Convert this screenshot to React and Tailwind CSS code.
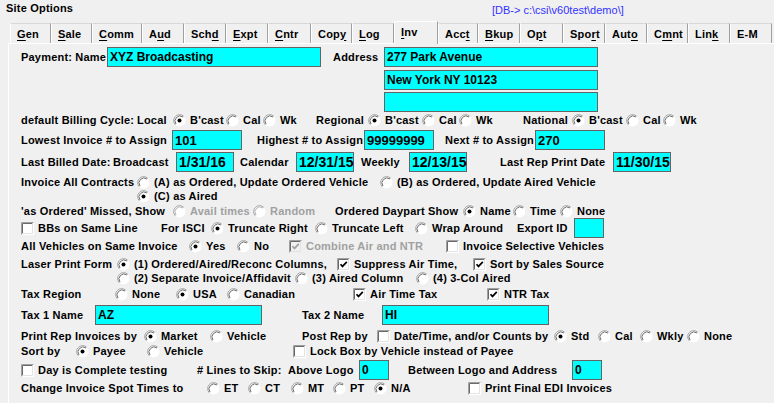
import React from 'react';

// Site Options — zakładka "Inv" (klasyczny formularz WinForms)

const TABS = [
  ['Gen', 0, 'w-[41px]'],
  ['Sale', 0, 'w-[41px]'],
  ['Comm', 0, 'w-[50px]'],
  ['Aud', 1, 'w-[42px]'],
  ['Schd', 3, 'w-[42px]'],
  ['Expt', 0, 'w-[42px]'],
  ['Cntr', 0, 'w-[43px]'],
  ['Copy', 3, 'w-[41px]'],
  ['Log', 0, 'w-[42px]'],
  ['Inv', 0, 'w-[44px]'],
  ['Acct', 3, 'w-[40px]'],
  ['Bkup', 0, 'w-[42px]'],
  ['Opt', 1, 'w-[43px]'],
  ['Sport', 3, 'w-[42px]'],
  ['Auto', 3, 'w-[42px]'],
  ['Cmnt', 1, 'w-[41px]'],
  ['Link', 3, 'w-[42px]'],
  ['E-M', -1, 'w-[42px]'],
];

function Radio({ on, off }) {
  return (
    <svg width="13" height="13" viewBox="0 0 13 13" className="shrink-0">
      <circle cx="6.5" cy="6.5" r="6" fill="#fff" />
      <path d="M2.26 10.74 A6 6 0 0 1 10.74 2.26" fill="none" stroke="#a0a0a0" strokeWidth="1" />
      <path d="M3.0 10.0 A5 5 0 0 1 10.0 3.0" fill="none" stroke={off ? '#b4b4b4' : '#6e6e6e'} strokeWidth="1" />
      {on && <circle cx="6.5" cy="6.5" r="2" fill={off ? '#a0a0a0' : '#000'} />}
    </svg>
  );
}

function Box({ on, off }) {
  return (
    <svg width="13" height="13" viewBox="0 0 13 13" className="shrink-0">
      <rect x="0" y="0" width="13" height="13" fill={off ? '#f0f0f0' : '#fff'} />
      <path d="M0.5 12.5 V0.5 H12.5" fill="none" stroke="#a0a0a0" />
      <path d="M1.5 11.5 V1.5 H11.5" fill="none" stroke="#696969" />
      <path d="M1.5 11.5 H11.5 V1.5" fill="none" stroke="#e3e3e3" />
      {on && (
        <path d="M3.5 6.2 L5.5 8.4 L9.8 3.8" fill="none" stroke={off ? '#a0a0a0' : '#000'} strokeWidth="1.7" />
      )}
    </svg>
  );
}

const L = ({ w = '', gray, children }) => (
  <div className={`${w} shrink-0 ${gray ? 'text-[#a0a0a0]' : ''}`}>{children}</div>
);

const Opt = ({ w = '', on, off, children }) => (
  <div className={`${w} shrink-0 flex items-center ${off ? 'text-[#a0a0a0]' : ''}`}>
    <Radio on={on} off={off} />
    <span className="ml-[4px]">{children}</span>
  </div>
);

const Chk = ({ w = '', on, off, children }) => (
  <div className={`${w} shrink-0 flex items-center ${off ? 'text-[#a0a0a0]' : ''}`}>
    <Box on={on} off={off} />
    <span className="ml-[4px]">{children}</span>
  </div>
);

const Field = ({ w, size = 'text-[12px]', className = '', children }) => (
  <div className={`${w} ${size} ${className} h-full shrink-0 bg-[#00ffff] border border-[#646464] pl-[2px] flex items-center leading-none tracking-normal`}>
    {children}
  </div>
);

const Row = ({ className, children }) => (
  <div className={`flex items-center whitespace-nowrap pl-[12px] ${className}`}>{children}</div>
);

function Tab({ label, u, w, active }) {
  const text =
    u < 0 ? label : (
      <>
        {label.slice(0, u)}
        <span className="underline underline-offset-2">{label[u]}</span>
        {label.slice(u + 1)}
      </>
    );
  return active ? (
    <div className={`${w} h-[23px] -mb-[1px] relative z-10 bg-[#f0f0f0] border-t border-l border-white border-r border-r-[#a0a0a0] pl-[6px] pb-[3px] flex items-center`}>
      {text}
    </div>
  ) : (
    <div className={`${w} h-[20px] border-t border-t-[#d8d8d8] border-l border-l-white border-r border-r-[#a0a0a0] pl-[6px] flex items-center`}>
      {text}
    </div>
  );
}

export default function App() {
  return (
    <div className="w-[774px] h-[403px] overflow-hidden bg-[#f0f0f0] text-black text-[11px] font-bold leading-[14px] tracking-[0.2px] font-['Liberation_Sans',Arial,sans-serif]">
      {/* nagłówek */}
      <div className="h-[21px] flex items-start whitespace-nowrap">
        <div className="w-[492px] pl-[6px] pt-[1px]">Site Options</div>
        <div className="pt-[3px] font-normal tracking-normal text-[#3333ff]">[DB-&gt; c:\csi\v60test\demo\]</div>
      </div>

      {/* zakładki */}
      <div className="h-[22px] flex items-end pl-[10px] whitespace-nowrap">
        {TABS.map(([label, u, w]) => (
          <Tab key={label} label={label} u={u} w={w} active={label === 'Inv'} />
        ))}
      </div>

      {/* panel zakładki Inv */}
      <div className="ml-[8px] h-[360px] border-l border-t border-white">
        <Row className="mt-[3px] h-[20px]">
          <L w="w-[86px]">Payment: Name</L>
          <Field w="w-[214px]">XYZ Broadcasting</Field>
          <L w="w-[51px] ml-[12px]">Address</L>
          <Field w="w-[214px]">277 Park Avenue</Field>
        </Row>
        <Row className="mt-[3px] h-[20px]">
          <Field w="w-[214px] ml-[363px]">New York NY 10123</Field>
        </Row>
        <Row className="mt-[2px] h-[20px]">
          <Field w="w-[214px] ml-[363px]"></Field>
        </Row>

        <Row className="mt-[1px] h-[14px]">
          <L w="w-[116px]">default Billing Cycle:</L>
          <L w="w-[36px]">Local</L>
          <Opt w="w-[53px]" on>B'cast</Opt>
          <Opt w="w-[37px]">Cal</Opt>
          <Opt w="w-[53px]">Wk</Opt>
          <L w="w-[52px]">Regional</L>
          <Opt w="w-[54px]" on>B'cast</Opt>
          <Opt w="w-[37px]">Cal</Opt>
          <Opt w="w-[64px]">Wk</Opt>
          <L w="w-[49px]">National</L>
          <Opt w="w-[54px]" on>B'cast</Opt>
          <Opt w="w-[37px]">Cal</Opt>
          <Opt>Wk</Opt>
        </Row>

        <Row className="mt-[3px] h-[20px]">
          <L w="w-[151px]">Lowest Invoice # to Assign</L>
          <Field w="w-[70px]" size="text-[13px]">101</Field>
          <L w="w-[107px] ml-[15px]">Highest # to Assign</L>
          <Field w="w-[70px]" size="text-[13px]">99999999</Field>
          <L w="w-[90px] ml-[11px]">Next # to Assign</L>
          <Field w="w-[70px]" size="text-[13px]">270</Field>
        </Row>

        <Row className="mt-[2px] h-[20px]">
          <L w="w-[92px]">Last Billed Date:</L>
          <L w="w-[63px]">Broadcast</L>
          <Field w="w-[58px]" size="text-[14px]">1/31/16</Field>
          <L w="w-[56px] ml-[6px]">Calendar</L>
          <Field w="w-[58px]" size="text-[14px]">12/31/15</Field>
          <L w="w-[48px] ml-[7px]">Weekly</L>
          <Field w="w-[58px]" size="text-[14px]">12/13/15</Field>
          <L w="w-[113px] ml-[33px]">Last Rep Print Date</L>
          <Field w="w-[58px]" size="text-[14px]">11/30/15</Field>
        </Row>

        <Row className="mt-[3px] h-[14px]">
          <L w="w-[116px]">Invoice All Contracts</L>
          <Opt w="w-[243px]">(A) as Ordered, Update Ordered Vehicle</Opt>
          <Opt>(B) as Ordered, Update Aired Vehicle</Opt>
        </Row>
        <Row className="h-[14px]">
          <Opt w="ml-[116px]" on>(C) as Aired</Opt>
        </Row>

        <Row className="mt-[1px] h-[14px]">
          <L w="w-[152px]">'as Ordered' Missed, Show</L>
          <Opt w="w-[80px]" off>Avail times</Opt>
          <Opt w="w-[82px]" off>Random</Opt>
          <L w="w-[128px]">Ordered Daypart Show</L>
          <Opt w="w-[50px]" on>Name</Opt>
          <Opt w="w-[47px]">Time</Opt>
          <Opt>None</Opt>
        </Row>

        <Row className="h-[20px]">
          <Chk w="w-[140px]">BBs on Same Line</Chk>
          <L w="w-[50px]">For ISCI</L>
          <Opt w="w-[104px]" on>Truncate Right</Opt>
          <Opt w="w-[100px]">Truncate Left</Opt>
          <Opt w="w-[102px]">Wrap Around</Opt>
          <L w="w-[57px]">Export ID</L>
          <Field w="w-[30px]"></Field>
        </Row>

        <Row className="mt-[1px] h-[14px]">
          <L w="w-[168px]">All Vehicles on Same Invoice</L>
          <Opt w="w-[48px]" on>Yes</Opt>
          <Opt w="w-[52px]">No</Opt>
          <Chk w="w-[157px]" on off>Combine Air and NTR</Chk>
          <Chk>Invoice Selective Vehicles</Chk>
        </Row>

        <Row className="mt-[4px] h-[14px]">
          <L w="w-[96px]">Laser Print Form</L>
          <Opt w="w-[220px]" on>(1) Ordered/Aired/Reconc Columns,</Opt>
          <Chk w="w-[136px]" on>Suppress Air Time,</Chk>
          <Chk on>Sort by Sales Source</Chk>
        </Row>
        <Row className="h-[14px]">
          <Opt w="w-[178px] ml-[96px]">(2) Separate Invoice/Affidavit</Opt>
          <Opt w="w-[121px]">(3) Aired Column</Opt>
          <Opt>(4) 3-Col Aired</Opt>
        </Row>

        <Row className="mt-[2px] h-[14px]">
          <L w="w-[94px]">Tax Region</L>
          <Opt w="w-[61px]">None</Opt>
          <Opt w="w-[51px]" on>USA</Opt>
          <Opt w="w-[126px]">Canadian</Opt>
          <Chk w="w-[134px]" on>Air Time Tax</Chk>
          <Chk on>NTR Tax</Chk>
        </Row>

        <Row className="mt-[4px] h-[20px]">
          <L w="w-[74px]">Tax 1 Name</L>
          <Field w="w-[167px]">AZ</Field>
          <L w="w-[80px] ml-[40px]">Tax 2 Name</L>
          <Field w="w-[167px]">HI</Field>
        </Row>

        <Row className="mt-[4px] h-[14px]">
          <L w="w-[123px]">Print Rep Invoices by</L>
          <Opt w="w-[66px]" on>Market</Opt>
          <Opt w="w-[92px]">Vehicle</Opt>
          <L w="w-[75px]">Post Rep by</L>
          <Chk w="w-[177px]">Date/Time, and/or Counts by</Chk>
          <Opt w="w-[44px]" on>Std</Opt>
          <Opt w="w-[42px]">Cal</Opt>
          <Opt w="w-[47px]">Wkly</Opt>
          <Opt>None</Opt>
        </Row>

        <Row className="mt-[1px] h-[14px]">
          <L w="w-[55px]">Sort by</L>
          <Opt w="w-[71px]" on>Payee</Opt>
          <Opt w="w-[146px]">Vehicle</Opt>
          <Chk>Lock Box by Vehicle instead of Payee</Chk>
        </Row>

        <Row className="mt-[2px] h-[20px]">
          <Chk w="w-[176px]">Day is Complete testing</Chk>
          <L w="w-[91px]"># Lines to Skip:</L>
          <L w="w-[71px]">Above Logo</L>
          <Field w="w-[30px]" size="text-[12px]">0</Field>
          <L w="w-[164px] ml-[19px]">Between Logo and Address</L>
          <Field w="w-[30px]" size="text-[12px]">0</Field>
        </Row>

        <Row className="mt-[1px] h-[14px]">
          <L w="w-[186px]">Change Invoice Spot Times to</L>
          <Opt w="w-[41px]">ET</Opt>
          <Opt w="w-[43px]">CT</Opt>
          <Opt w="w-[42px]">MT</Opt>
          <Opt w="w-[41px]">PT</Opt>
          <Opt w="w-[94px]" on>N/A</Opt>
          <Chk>Print Final EDI Invoices</Chk>
        </Row>
      </div>
    </div>
  );
}
